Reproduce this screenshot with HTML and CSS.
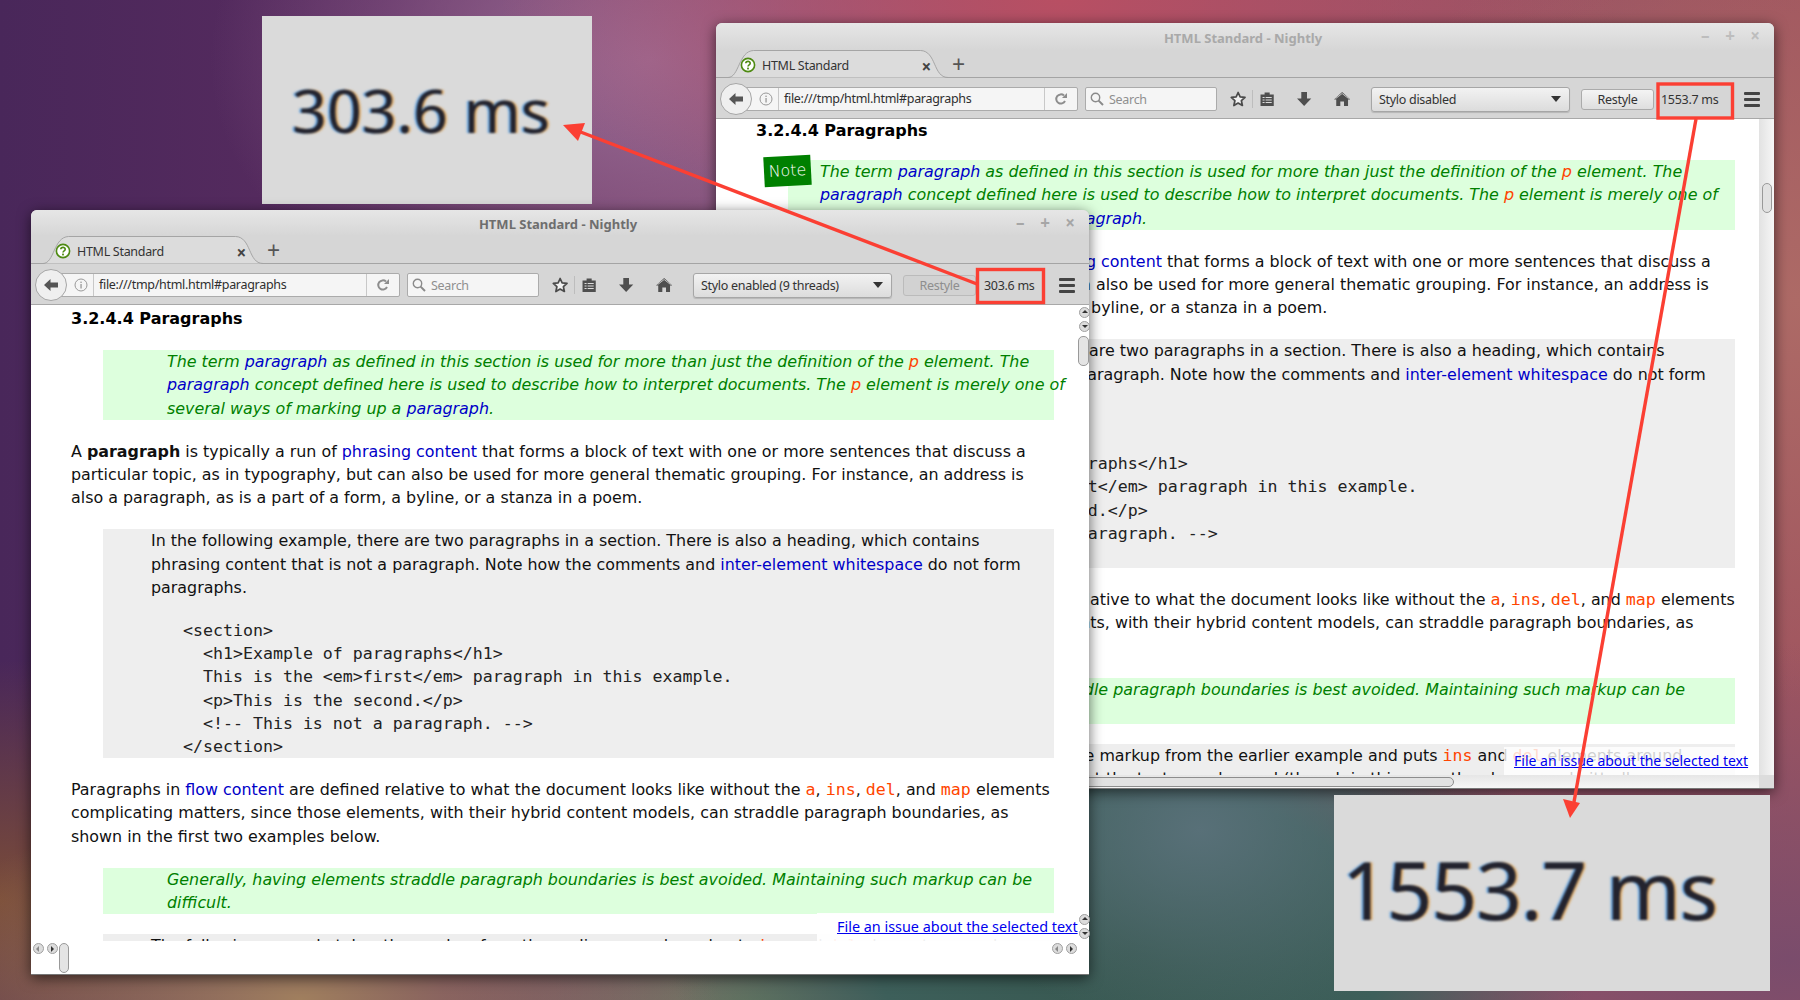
FILE: index.html
```html
<!DOCTYPE html>
<html lang="en">
<head>
    <meta charset="UTF-8">
    <meta name="viewport" content="width=device-width, initial-scale=1.0">
    <title>Stylo restyle timing</title>
    <link rel="stylesheet" href="styles.css">
</head>
<body>
    <!-- toolbar icons, shared by both windows -->
    <svg class="sprites" width="0" height="0">
        <symbol id="i-tab" viewBox="0 0 232 28" preserveAspectRatio="none">
            <path d="M0 27.5C12 27.5 11 1 27 .5H203C220 1 216 27.5 232 27.5" fill="#dcdcdc" stroke="#a4a4a4"/>
        </symbol>
        <symbol id="i-favicon" viewBox="0 0 16 16">
            <circle cx="8" cy="8" r="6.6" fill="#fff" stroke="#4e8a12" stroke-width="1.6"/>
            <path d="M5.8 6.2C5.9 3.8 10.2 3.8 10.2 6.2 10.2 7.8 8 7.8 8 9.6" fill="none" stroke="#4e8a12" stroke-width="1.6"/>
            <rect x="7.1" y="10.6" width="1.8" height="1.8" fill="#4e8a12"/>
        </symbol>
        <symbol id="i-back" viewBox="0 0 16 16">
            <path d="M1 8 7.5 2V5.5H15V10.5H7.5V14Z" fill="#555"/>
        </symbol>
        <symbol id="i-info" viewBox="0 0 14 14">
            <circle cx="7" cy="7" r="6" fill="none" stroke="#999"/>
            <rect x="6.4" y="6" width="1.3" height="4.5" fill="#999"/>
            <rect x="6.4" y="3.6" width="1.3" height="1.4" fill="#999"/>
        </symbol>
        <symbol id="i-reload" viewBox="0 0 14 14">
            <path d="M11 9A4.6 4.6 0 1 1 10 3.6" fill="none" stroke="#8d8d8d" stroke-width="2"/>
            <path d="M8 6H13V1Z" fill="#8d8d8d"/>
        </symbol>
        <symbol id="i-search" viewBox="0 0 14 14">
            <circle cx="5.5" cy="5.5" r="4.2" fill="none" stroke="#8a8a8a" stroke-width="1.4"/>
            <path d="M8.6 8.6 13 13" stroke="#8a8a8a" stroke-width="2"/>
        </symbol>
        <symbol id="i-star" viewBox="0 0 18 18">
            <path d="M9 1.8 11.2 6.7 16.6 7.3 12.6 10.9 13.7 16.2 9 13.5 4.3 16.2 5.4 10.9 1.4 7.3 6.8 6.7Z" fill="#f0f0f0" stroke="#4a4a4a" stroke-width="1.9" stroke-linejoin="round"/>
        </symbol>
        <symbol id="i-list" viewBox="0 0 16 16">
            <path d="M1.5 3.5H5.5V1.5H10.5V3.5H14.5V15H1.5Z" fill="#4f4f4f"/>
            <path d="M3.5 6.5H12.5M3.5 9H12.5M3.5 11.5H12.5" stroke="#dcdcdc"/>
            <path d="M6 6V13" stroke="#4f4f4f"/>
        </symbol>
        <symbol id="i-down" viewBox="0 0 16 16">
            <path d="M5.2 1H10.8V7.5H15L8 15 1 7.5H5.2Z" fill="#4f4f4f"/>
        </symbol>
        <symbol id="i-home" viewBox="0 0 16 16">
            <path d="M8 1 16 8.4H13.8V15H9.8V10.4H6.2V15H2.2V8.4H0Z" fill="#4f4f4f"/>
            <path d="M1.6 7.6 8 2.6 14.4 7.6" fill="none" stroke="#dcdcdc" stroke-width=".8"/>
        </symbol>
    </svg>

    <div class="zoom-box zoom-top"><span>303.6 ms</span></div>

    <!-- back window: stylo disabled -->
    <section class="window window-back">
        <div class="title-row">
            <span class="title-text">HTML Standard - Nightly</span>
            <div class="window-controls"><span>&#8211;</span><span>+</span><span>&#215;</span></div>
        </div>
        <div class="tab-strip">
            <div class="tab">
                <svg class="tab-shape"><use href="#i-tab"/></svg>
                <svg class="favicon"><use href="#i-favicon"/></svg>
                <span class="tab-label">HTML Standard</span>
                <span class="tab-close">&#215;</span>
            </div>
            <span class="new-tab">+</span>
        </div>
        <div class="toolbar">
            <span class="back-btn"><svg><use href="#i-back"/></svg></span>
            <div class="url-bar">
                <svg class="url-info"><use href="#i-info"/></svg>
                <span class="url-text">file:///tmp/html.html#paragraphs</span>
                <svg class="url-reload"><use href="#i-reload"/></svg>
            </div>
            <div class="search-bar"><svg><use href="#i-search"/></svg><span>Search</span></div>
            <div class="tool-icons">
                <svg><use href="#i-star"/></svg>
                <i class="tool-sep"></i>
                <svg><use href="#i-list"/></svg>
                <svg><use href="#i-down"/></svg>
                <svg><use href="#i-home"/></svg>
            </div>
            <div class="mode-select">Stylo disabled<i class="caret"></i></div>
            <button class="restyle">Restyle</button>
            <span class="timing">1553.7 ms</span>
            <div class="hamburger"><i></i><i></i><i></i></div>
        </div>
        <div class="page">
            <div class="doc-row">
                <div class="doc-view">
                    <div class="doc">
                        <h4>3.2.4.4 Paragraphs</h4>
                        <div class="note">
                            <span class="note-tag">Note</span>
                            The term <a>paragraph</a> as defined in this section is used for more than just the definition of the <code class="el">p</code> element. The<br>
                            <a>paragraph</a> concept defined here is used to describe how to interpret documents. The <code class="el">p</code> element is merely one of<br>
                            several ways of marking up a <a>paragraph</a>.
                        </div>
                        <p>A <b>paragraph</b> is typically a run of <a>phrasing content</a> that forms a block of text with one or more sentences that discuss a<br>
                        particular topic, as in typography, but can also be used for more general thematic grouping. For instance, an address is<br>
                        also a paragraph, as is a part of a form, a byline, or a stanza in a poem.</p>
                        <div class="example">
                            <div class="example-text">In the following example, there are two paragraphs in a section. There is also a heading, which contains<br>
                            phrasing content that is not a paragraph. Note how the comments and <a>inter-element whitespace</a> do not form<br>
                            paragraphs.</div>
<pre>&lt;section&gt;
  &lt;h1&gt;Example of paragraphs&lt;/h1&gt;
  This is the &lt;em&gt;first&lt;/em&gt; paragraph in this example.
  &lt;p&gt;This is the second.&lt;/p&gt;
  &lt;!-- This is not a paragraph. --&gt;
&lt;/section&gt;</pre>
                        </div>
                        <p>Paragraphs in <a>flow content</a> are defined relative to what the document looks like without the <code class="el">a</code>, <code class="el">ins</code>, <code class="el">del</code>, and <code class="el">map</code> elements<br>
                        complicating matters, since those elements, with their hybrid content models, can straddle paragraph boundaries, as<br>
                        shown in the first two examples below.</p>
                        <div class="note">
                            Generally, having elements straddle paragraph boundaries is best avoided. Maintaining such markup can be<br>
                            difficult.
                        </div>
                        <div class="example example-last">
                            <div class="example-text">The following example takes the markup from the earlier example and puts <code class="el">ins</code> and <code class="el">del</code> elements around<br>
                            some of the markup to show that the text was changed (though in this case, the changes admittedly</div>
                        </div>
                    </div>
                    <div class="issue-panel"><a>File an issue about the selected text</a></div>
                </div>
                <div class="v-gutter"><span class="v-thumb"></span></div>
            </div>
            <div class="h-gutter"><span class="h-thumb"></span><span class="h-corner"></span></div>
        </div>
    </section>

    <!-- front window: stylo enabled -->
    <section class="window window-front">
        <div class="title-row">
            <span class="title-text">HTML Standard - Nightly</span>
            <div class="window-controls"><span>&#8211;</span><span>+</span><span>&#215;</span></div>
        </div>
        <div class="tab-strip">
            <div class="tab">
                <svg class="tab-shape"><use href="#i-tab"/></svg>
                <svg class="favicon"><use href="#i-favicon"/></svg>
                <span class="tab-label">HTML Standard</span>
                <span class="tab-close">&#215;</span>
            </div>
            <span class="new-tab">+</span>
        </div>
        <div class="toolbar">
            <span class="back-btn"><svg><use href="#i-back"/></svg></span>
            <div class="url-bar">
                <svg class="url-info"><use href="#i-info"/></svg>
                <span class="url-text">file:///tmp/html.html#paragraphs</span>
                <svg class="url-reload"><use href="#i-reload"/></svg>
            </div>
            <div class="search-bar"><svg><use href="#i-search"/></svg><span>Search</span></div>
            <div class="tool-icons">
                <svg><use href="#i-star"/></svg>
                <i class="tool-sep"></i>
                <svg><use href="#i-list"/></svg>
                <svg><use href="#i-down"/></svg>
                <svg><use href="#i-home"/></svg>
            </div>
            <div class="mode-select">Stylo enabled (9 threads)<i class="caret"></i></div>
            <button class="restyle" disabled>Restyle</button>
            <span class="timing">303.6 ms</span>
            <div class="hamburger"><i></i><i></i><i></i></div>
        </div>
        <div class="page">
            <div class="doc-row">
                <div class="doc-view">
                    <div class="doc">
                        <h4>3.2.4.4 Paragraphs</h4>
                        <div class="note">
                            The term <a>paragraph</a> as defined in this section is used for more than just the definition of the <code class="el">p</code> element. The<br>
                            <a>paragraph</a> concept defined here is used to describe how to interpret documents. The <code class="el">p</code> element is merely one of<br>
                            several ways of marking up a <a>paragraph</a>.
                        </div>
                        <p>A <b>paragraph</b> is typically a run of <a>phrasing content</a> that forms a block of text with one or more sentences that discuss a<br>
                        particular topic, as in typography, but can also be used for more general thematic grouping. For instance, an address is<br>
                        also a paragraph, as is a part of a form, a byline, or a stanza in a poem.</p>
                        <div class="example">
                            <div class="example-text">In the following example, there are two paragraphs in a section. There is also a heading, which contains<br>
                            phrasing content that is not a paragraph. Note how the comments and <a>inter-element whitespace</a> do not form<br>
                            paragraphs.</div>
<pre>&lt;section&gt;
  &lt;h1&gt;Example of paragraphs&lt;/h1&gt;
  This is the &lt;em&gt;first&lt;/em&gt; paragraph in this example.
  &lt;p&gt;This is the second.&lt;/p&gt;
  &lt;!-- This is not a paragraph. --&gt;
&lt;/section&gt;</pre>
                        </div>
                        <p>Paragraphs in <a>flow content</a> are defined relative to what the document looks like without the <code class="el">a</code>, <code class="el">ins</code>, <code class="el">del</code>, and <code class="el">map</code> elements<br>
                        complicating matters, since those elements, with their hybrid content models, can straddle paragraph boundaries, as<br>
                        shown in the first two examples below.</p>
                        <div class="note">
                            Generally, having elements straddle paragraph boundaries is best avoided. Maintaining such markup can be<br>
                            difficult.
                        </div>
                        <div class="example example-last">
                            <div class="example-text">The following example takes the markup from the earlier example and puts <code class="el">ins</code> and <code class="el">del</code> elements around<br>
                            some of the markup to show that the text was changed</div>
                        </div>
                    </div>
                    <div class="issue-panel"><a>File an issue about the selected text</a></div>
                </div>
            </div>
            <span class="mini-btn up v-top-a"></span>
            <span class="mini-btn down v-top-b"></span>
            <span class="mini-thumb v-main"></span>
            <span class="mini-btn up v-low-a"></span>
            <span class="mini-btn down v-low-b"></span>
            <span class="mini-btn left h-left-a"></span>
            <span class="mini-btn right h-left-b"></span>
            <span class="mini-thumb h-main"></span>
            <span class="mini-btn left h-right-a"></span>
            <span class="mini-btn right h-right-b"></span>
        </div>
    </section>

    <div class="zoom-box zoom-bottom"><span>1553.7 ms</span></div>

    <!-- red annotations drawn on top of the screenshot -->
    <svg class="annotations" width="1800" height="1000" viewBox="0 0 1800 1000">
        <g fill="none" stroke="#fb3f33" stroke-width="3.4">
            <rect x="977.5" y="269.5" width="66" height="33"/>
            <rect x="1658" y="84" width="74.5" height="34"/>
            <path d="M977 284 578 131"/>
            <path d="M1696 119 1574 802"/>
        </g>
        <path d="M563 125 585 123 578 141Z" fill="#fb3f33"/>
        <path d="M1570 818 1563 799 1580 803Z" fill="#fb3f33"/>
    </svg>
</body>
</html>
```

FILE: styles.css
```css
* {
    box-sizing: border-box;
}
html, body {
    margin: 0;
    padding: 0;
}
body {
    position: relative;
    width: 1800px;
    height: 1000px;
    overflow: hidden;
    font-family: "DejaVu Sans", sans-serif;
    background-color: #5a4560;
    background-image:
        radial-gradient(ellipse 260px 200px at 1200px 830px, #587078 0%, rgba(88, 112, 120, 0) 100%),
        radial-gradient(ellipse 460px 300px at 1130px 950px, #37574f 0%, #3d5f5a 55%, rgba(61, 95, 90, 0) 100%),
        radial-gradient(ellipse 420px 200px at 300px 1000px, #a07f5e 0%, rgba(160, 127, 94, 0) 100%),
        radial-gradient(ellipse 320px 180px at 760px 1010px, #6e7d62 0%, rgba(110, 125, 98, 0) 100%),
        radial-gradient(ellipse 300px 240px at 0 900px, #7a4c38 0%, rgba(122, 76, 56, 0) 100%),
        radial-gradient(ellipse 560px 320px at 1790px 960px, #7a4c6c 0%, rgba(122, 76, 108, 0) 100%),
        radial-gradient(ellipse 500px 400px at 1800px 300px, #ad6a66 0%, rgba(173, 106, 102, 0) 100%),
        radial-gradient(ellipse 560px 240px at 1060px 0, #b84f63 0%, rgba(184, 79, 99, 0) 100%),
        radial-gradient(ellipse 440px 300px at 650px 60px, #996a94 0%, rgba(153, 106, 148, 0) 100%),
        linear-gradient(90deg, #49275a 0%, #5a2c60 22%, #8a5070 50%, #a0555f 100%);
}
.sprites {
    position: absolute;
}

/* magnified timings */
.zoom-box {
    position: absolute;
    display: flex;
    align-items: center;
    background-color: #dadada;
    font-family: "Noto Sans", sans-serif;
    color: #23232e;
    white-space: nowrap;
}
.zoom-box span {
    filter: blur(1.3px);
    text-shadow: -2px 0 1px rgba(50, 140, 225, 0.7), 2px 0 1px rgba(225, 150, 50, 0.7);
}
.zoom-top {
    left: 262px;
    top: 16px;
    width: 330px;
    height: 188px;
    padding-left: 30px;
    padding-bottom: 2px;
    font-size: 61px;
}
.zoom-bottom {
    left: 1334px;
    top: 795px;
    width: 436px;
    height: 196px;
    padding-left: 8px;
    padding-bottom: 10px;
    font-size: 80px;
    letter-spacing: -1px;
}

/* window frame */
.window {
    position: absolute;
    width: 1058px;
    height: 765px;
    display: flex;
    flex-direction: column;
    background-color: #d6d6d6;
    border-radius: 6px 6px 0 0;
    box-shadow: 0 3px 14px rgba(0, 0, 0, 0.6);
    font-family: "Noto Sans", sans-serif;
    font-size: 12.5px;
    letter-spacing: -0.3px;
    color: #333;
}
.window-back {
    left: 716px;
    top: 23px;
    height: 766px;
}
.window-front {
    left: 31px;
    top: 210px;
}
.title-row {
    position: relative;
    flex: none;
    height: 26px;
    display: flex;
    align-items: center;
    justify-content: center;
    background-image: linear-gradient(#e6e6e6, #d6d6d6);
    border-radius: 6px 6px 0 0;
}
.window-back .title-row {
    height: 27px;
}
.title-text {
    font-size: 13px;
    letter-spacing: 0;
    font-weight: 700;
    color: #6e6e6e;
    padding-top: 2px;
    margin-left: -4px;
}
.window-back .title-text {
    color: #a9a9a9;
}
.window-controls {
    position: absolute;
    right: 12px;
    top: 3px;
    display: flex;
    gap: 11px;
    font-size: 17px;
    font-weight: 700;
    line-height: 20px;
    color: #a6a6a6;
}
.window-controls span {
    width: 14px;
    text-align: center;
}
.window-back .window-controls {
    color: #bdbdbd;
}

/* tabs */
.tab-strip {
    flex: none;
    height: 28px;
    display: flex;
    align-items: flex-end;
    padding-left: 12px;
    border-bottom: 1px solid #a4a4a4;
}
.tab {
    position: relative;
    width: 220px;
    height: 28px;
    margin-bottom: -1px;
    display: flex;
    align-items: center;
    padding: 2px 0 0 12px;
}
.tab-shape {
    position: absolute;
    left: 0;
    top: 0;
    width: 100%;
    height: 100%;
}
.favicon {
    position: relative;
    width: 16px;
    height: 16px;
}
.tab-label {
    position: relative;
    margin-left: 6px;
}
.tab-close {
    position: absolute;
    right: 17px;
    top: 5px;
    font-size: 17px;
    font-weight: 700;
    color: #444;
}
.new-tab {
    margin-left: 4px;
    height: 28px;
    font-size: 23px;
    line-height: 30px;
    color: #555;
}

/* toolbar */
.toolbar {
    flex: none;
    height: 41px;
    display: flex;
    align-items: center;
    padding: 2px 14px 0 25px;
    border-bottom: 1px solid #a8a8a8;
}
.back-btn {
    position: absolute;
    left: 4px;
    width: 32px;
    height: 32px;
    display: flex;
    align-items: center;
    justify-content: center;
    border: 1px solid #a6a6a6;
    border-radius: 50%;
    background-color: #efefef;
    z-index: 1;
}
.back-btn svg {
    width: 16px;
    height: 16px;
}
.url-bar {
    flex: 1;
    height: 24px;
    display: flex;
    align-items: center;
    padding-left: 17px;
    background-color: #f5f5f5;
    border: 1px solid #ababab;
    border-radius: 2px;
}
.url-info {
    width: 14px;
    height: 14px;
    margin-right: 5px;
}
.url-text {
    flex: 1;
    padding-left: 5px;
    border-left: 1px solid #c8c8c8;
    color: #2f2f2f;
    line-height: 22px;
}
.url-reload {
    width: 33px;
    height: 22px;
    padding: 4px 9px;
    border-left: 1px solid #c8c8c8;
}
.search-bar {
    flex: none;
    width: 132px;
    height: 24px;
    margin-left: 7px;
    display: flex;
    align-items: center;
    gap: 5px;
    padding-left: 4px;
    background-color: #f5f5f5;
    border: 1px solid #ababab;
    border-radius: 2px;
    color: #8f8f8f;
}
.search-bar svg {
    width: 14px;
    height: 14px;
}
.tool-icons {
    flex: none;
    display: flex;
    align-items: center;
    width: 154px;
    padding-left: 13px;
}
.tool-icons svg {
    width: 18px;
    height: 18px;
    margin-right: 21px;
}
.tool-icons svg:first-child {
    margin-right: 6px;
}
.tool-sep {
    width: 1px;
    height: 18px;
    margin-right: 6px;
    background-color: #bdbdbd;
}
.mode-select {
    position: relative;
    flex: none;
    width: 199px;
    height: 25px;
    padding-left: 7px;
    line-height: 23px;
    background-image: linear-gradient(#f2f2f2, #dcdcdc);
    border: 1px solid #a6a6a6;
    border-radius: 3px;
    box-shadow: 0 1px 1px rgba(0, 0, 0, 0.15);
}
.caret {
    position: absolute;
    right: 8px;
    top: 8px;
    border-left: 5px solid transparent;
    border-right: 5px solid transparent;
    border-top: 6px solid #333;
}
.restyle {
    flex: none;
    width: 73px;
    height: 21px;
    margin-left: 11px;
    padding: 0;
    font: inherit;
    letter-spacing: inherit;
    color: #333;
    background-image: linear-gradient(#f4f4f4, #dedede);
    border: 1px solid #ababab;
    border-radius: 3px;
}
.restyle:disabled {
    color: #8e8e8e;
    background-image: none;
    background-color: #d2d2d2;
    border-color: #bbb;
}
.timing {
    flex: none;
    width: 83px;
    padding-left: 8px;
    white-space: nowrap;
    color: #333;
}
.window-back .timing {
    width: 90px;
    padding-left: 7px;
}
.hamburger {
    flex: none;
    width: 16px;
    display: flex;
    flex-direction: column;
    gap: 3px;
}
.hamburger i {
    height: 3px;
    border-radius: 1px;
    background-color: #444;
}

/* page area */
.page {
    position: relative;
    flex: 1;
    min-height: 0;
    display: flex;
    flex-direction: column;
    background-color: #fff;
    border-bottom: 1px solid #777;
}
.doc-row {
    height: 636px;
    flex: none;
    display: flex;
}
.window-back .doc-row {
    height: 656px;
}
.doc-view {
    position: relative;
    flex: 1;
    min-width: 0;
    overflow: hidden;
}
.doc {
    padding: 2px 0 0 40px;
    font-family: "DejaVu Sans", sans-serif;
    font-size: 15.9px;
    letter-spacing: 0;
    line-height: 23.2px;
    color: #111;
    white-space: nowrap;
}
.window-back .doc {
    padding-top: 0;
}
.doc h4 {
    margin: 0 0 20px;
    font-size: 16px;
    line-height: 23.2px;
    color: #000;
}
.window-back .doc h4 {
    margin-bottom: 18px;
}
.doc p {
    margin: 20px 0;
}
.doc a {
    color: #0000c8;
}
.note {
    position: relative;
    width: 951px;
    margin-left: 32px;
    padding-left: 64px;
    background-color: #dfd;
    color: #008000;
    font-style: italic;
}
.window-back .note {
    width: 947px;
    padding-left: 32px;
}
.note-tag {
    position: absolute;
    left: -24px;
    top: -4px;
    width: 47px;
    height: 30px;
    background-color: #008000;
    color: #fff;
    font-style: normal;
    font-weight: 300;
    text-align: center;
    line-height: 30px;
    transform: rotate(-3deg);
}
.el {
    font-family: "DejaVu Sans Mono", monospace;
    font-size: 16.6px;
    color: #ff4500;
}
.note .el {
    font-family: "DejaVu Sans", sans-serif;
    font-size: 16px;
}
.example {
    width: 951px;
    margin-left: 32px;
    padding-left: 48px;
    background-color: #eee;
}
.window-back .example {
    width: 947px;
}
.example-last {
    margin-top: 20px;
}
.doc pre {
    margin: 20px 0 0;
    padding-left: 32px;
    font-family: "DejaVu Sans Mono", monospace;
    font-size: 16.6px;
    line-height: 23.2px;
    color: #222;
}
.issue-panel {
    position: absolute;
    right: 10px;
    bottom: 0;
    height: 28px;
    padding-top: 4px;
    background-color: rgba(255, 255, 255, 0.88);
    font-size: 14px;
    letter-spacing: 0;
    line-height: 20px;
    white-space: nowrap;
}
.issue-panel a {
    color: #0000ee;
    text-decoration: underline;
}
.window-front .issue-panel {
    right: 0;
    width: 272px;
    padding-left: 20px;
    font-size: 14.4px;
    background-color: rgba(255, 255, 255, 0.93);
}
.window-back .issue-panel {
    width: 245px;
    padding-left: 10px;
    background-color: rgba(255, 255, 255, 0.8);
}

/* back window scrollbars */
.v-gutter {
    position: relative;
    flex: none;
    width: 15px;
    background-image: linear-gradient(90deg, #e2e2e2, #f6f6f6);
}
.v-thumb {
    position: absolute;
    left: 3px;
    top: 64px;
    width: 10px;
    height: 30px;
    border: 1px solid #999;
    border-radius: 5px;
    background-color: #e2e2e2;
}
.h-gutter {
    position: relative;
    flex: 1;
    background-image: linear-gradient(#e6e6e6, #f6f6f6);
}
.h-thumb {
    position: absolute;
    left: 0;
    top: 2px;
    width: 738px;
    height: 10px;
    border: 1px solid #8d8d8d;
    border-radius: 0 5px 5px 0;
    background-color: #e2e2e2;
}
.h-corner {
    position: absolute;
    right: 0;
    top: 0;
    bottom: 0;
    width: 15px;
    background-color: #dcdcdc;
}

/* front window scrollbars, the small widgets float over the page */
.mini-btn {
    position: absolute;
    width: 11px;
    height: 11px;
    border: 1px solid #a0a0a0;
    border-radius: 6px;
    background-color: #dcdcdc;
}
.mini-btn::after {
    content: "";
    position: absolute;
    left: 2px;
    top: 2px;
    border: 3px solid transparent;
}
.mini-btn.up::after {
    top: -1px;
    border-bottom-color: #333;
}
.mini-btn.down::after {
    top: 3px;
    border-top-color: #333;
}
.mini-btn.left::after {
    left: -1px;
    border-right-color: #888;
}
.mini-btn.right::after {
    left: 3px;
    border-left-color: #333;
}
.mini-thumb {
    position: absolute;
    border: 1px solid #999;
    border-radius: 5px;
    background-color: #e4e4e4;
}
.v-top-a { left: 1048px; top: 2px; }
.v-top-b { left: 1048px; top: 16px; }
.v-main { left: 1047px; top: 31px; width: 11px; height: 30px; }
.v-low-a { left: 1048px; top: 609px; }
.v-low-b { left: 1048px; top: 623px; }
.h-left-a { left: 2px; top: 638px; }
.h-left-b { left: 16px; top: 638px; }
.h-main { left: 28px; top: 638px; width: 10px; height: 30px; }
.h-right-a { left: 1021px; top: 638px; }
.h-right-b { left: 1035px; top: 638px; }

/* annotation layer */
.annotations {
    position: absolute;
    left: 0;
    top: 0;
    pointer-events: none;
}
```
